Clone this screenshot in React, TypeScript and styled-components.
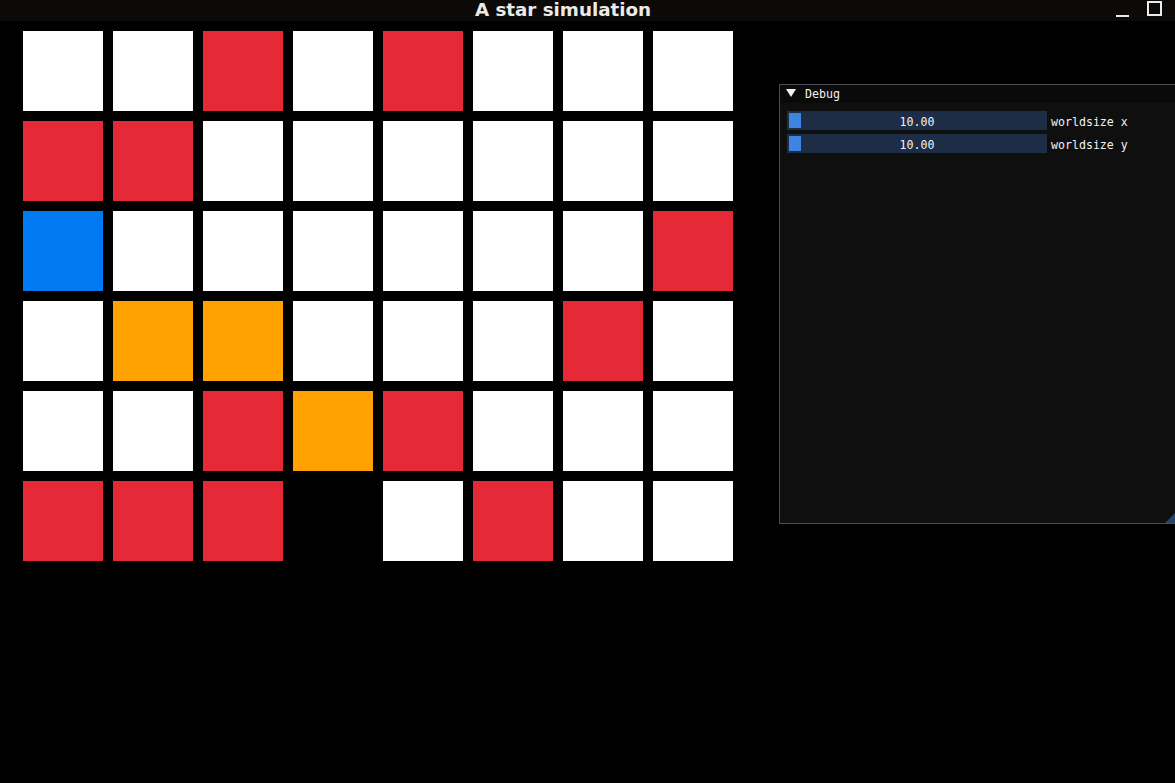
import React from 'react'
import styled, { createGlobalStyle } from 'styled-components'

const GlobalStyle = createGlobalStyle`
  html, body {
    margin: 0;
    padding: 0;
    background: #000;
    width: 1175px;
    height: 783px;
    overflow: hidden;
  }
`

const SWindow = styled.div`
  width: 1175px;
  height: 783px;
  background: #000;
  display: flex;
  flex-direction: column;
`

const STitleBar = styled.div`
  height: 21px;
  background: #0b0a09;
  display: flex;
  align-items: center;
`

const STitle = styled.div`
  flex: 1;
  text-align: center;
  padding-left: 10px;
  font-family: "DejaVu Sans", sans-serif;
  font-weight: bold;
  font-size: 18.3px;
  line-height: 17px;
  color: #ebebe6;
  margin-top: -2px;
`

const SControls = styled.div`
  display: flex;
  align-items: center;
  gap: 18px;
  padding-right: 13px;
  height: 21px;
`

const SMinimize = styled.div`
  width: 13px;
  height: 2px;
  background: #e8e8e8;
  margin-top: 10px;
`

const SMaximize = styled.div`
  width: 11px;
  height: 11px;
  border: 2px solid #ececec;
  margin-top: -5px;
`

const SMain = styled.div`
  display: flex;
  align-items: flex-start;
  padding-left: 23px;
  padding-top: 10px;
`

const SGrid = styled.div`
  display: grid;
  grid-template-columns: repeat(8, 80px);
  grid-auto-rows: 80px;
  gap: 10px;
`

const SCell = styled.div<{ $c: string }>`
  background: ${p => p.$c};
`

const SPanel = styled.div`
  margin-left: 46px;
  margin-top: 53px;
  width: 400px;
  height: 438px;
  border: 1px solid #4c4c57;
  border-right: none;
  background: #0f0f0f;
  display: flex;
  flex-direction: column;
  position: relative;
  font-family: "DejaVu Sans Mono", monospace;
  font-size: 11.6px;
  color: #f2f2f2;
`

const SHeader = styled.div`
  height: 18px;
  background: #0a0a0a;
  display: flex;
  align-items: center;
  padding-left: 6px;
  gap: 9px;
`

const STriangle = styled.div`
  width: 0;
  height: 0;
  border-left: 5px solid transparent;
  border-right: 5px solid transparent;
  border-top: 8px solid #f2f2f2;
  margin-top: -2px;
`

const SBody = styled.div`
  padding: 8px 7px;
  display: flex;
  flex-direction: column;
  gap: 4px;
`

const SRow = styled.div`
  display: flex;
  align-items: flex-start;
  gap: 4px;
  height: 19px;
`

const SSlider = styled.div`
  box-sizing: border-box;
  width: 260px;
  height: 19px;
  padding-top: 3px;
  line-height: 16px;
  background: #1d2d46;
  position: relative;
  text-align: center;
`

const SGrab = styled.div`
  position: absolute;
  left: 2px;
  top: 2px;
  width: 12px;
  height: 15px;
  background: #3d85e0;
`

const SValue = styled.span`
  color: #f2f2f2;
`

const SLabel = styled.span`
  padding-top: 3px;
  line-height: 16px;
`

const SResize = styled.div`
  position: absolute;
  right: 0;
  bottom: 0;
  width: 0;
  height: 0;
  border-left: 10px solid transparent;
  border-bottom: 10px solid #25456d;
`

const W = '#ffffff'
const R = '#e62937'
const B = '#0079f1'
const O = '#ffa100'
const E = '#000000'

const cells = [
  [W, W, R, W, R, W, W, W],
  [R, R, W, W, W, W, W, W],
  [B, W, W, W, W, W, W, R],
  [W, O, O, W, W, W, R, W],
  [W, W, R, O, R, W, W, W],
  [R, R, R, E, W, R, W, W],
]

function Slider({ label }: { label: string }) {
  return (
    <SRow>
      <SSlider>
        <SGrab />
        <SValue>10.00</SValue>
      </SSlider>
      <SLabel>{label}</SLabel>
    </SRow>
  )
}

export default function App() {
  return (
    <SWindow>
      <GlobalStyle />
      <STitleBar>
        <STitle>A star simulation</STitle>
        <SControls>
          <SMinimize />
          <SMaximize />
        </SControls>
      </STitleBar>
      <SMain>
        <SGrid>
          {cells.flat().map((c, i) => (
            <SCell key={i} $c={c} />
          ))}
        </SGrid>
        <SPanel>
          <SHeader>
            <STriangle />
            <span>Debug</span>
          </SHeader>
          <SBody>
            <Slider label="worldsize x" />
            <Slider label="worldsize y" />
          </SBody>
          <SResize />
        </SPanel>
      </SMain>
    </SWindow>
  )
}
